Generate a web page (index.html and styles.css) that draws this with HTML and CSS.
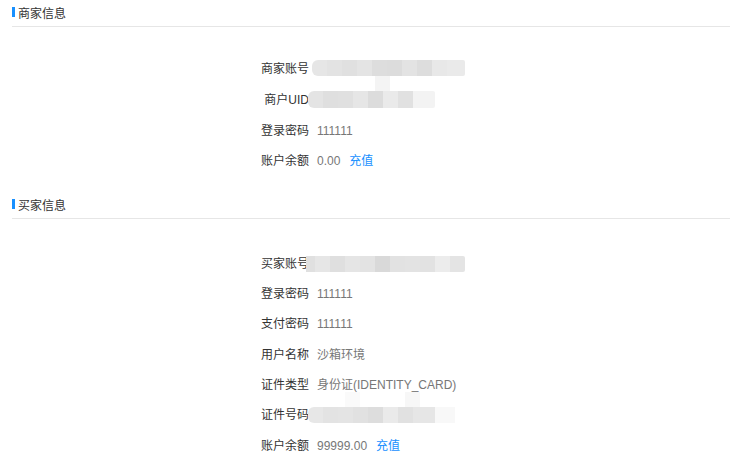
FILE: index.html
```html
<!DOCTYPE html>
<html lang="zh-CN">
<head>
<meta charset="utf-8">
<title>账户信息</title>
<link rel="stylesheet" href="styles.css">
</head>
<body>
<div class="page">
  <section class="section section-merchant">
    <div class="section-head"><span class="bar"></span><span class="title">商家信息</span></div>
    <div class="rows">
      <div class="row"><span class="label">商家账号</span><span class="value"><span class="blur blur-merchant"></span></span></div>
      <div class="row"><span class="label">商户UID</span><span class="value"><span class="blur blur-uid"></span></span></div>
      <div class="row"><span class="label">登录密码</span><span class="value">111111</span></div>
      <div class="row"><span class="label">账户余额</span><span class="value">0.00<a class="link" href="#">充值</a></span></div>
    </div>
  </section>
  <section class="section section-buyer">
    <div class="section-head"><span class="bar"></span><span class="title">买家信息</span></div>
    <div class="rows">
      <div class="row"><span class="label">买家账号</span><span class="value"><span class="blur blur-buyer"></span></span></div>
      <div class="row"><span class="label">登录密码</span><span class="value">111111</span></div>
      <div class="row"><span class="label">支付密码</span><span class="value">111111</span></div>
      <div class="row"><span class="label">用户名称</span><span class="value">沙箱环境</span></div>
      <div class="row"><span class="label">证件类型</span><span class="value">身份证(IDENTITY_CARD)</span></div>
      <div class="row"><span class="label">证件号码</span><span class="value"><span class="blur blur-id"></span></span></div>
      <div class="row"><span class="label">账户余额</span><span class="value">99999.00<a class="link" href="#">充值</a></span></div>
    </div>
  </section>
</div>
</body>
</html>
```
FILE: styles.css
```css
html, body {
  margin: 0;
  padding: 0;
  background: #ffffff;
}
body {
  font-family: "Liberation Sans", "Noto Sans CJK SC", sans-serif;
  font-size: 12px;
  color: #333333;
}
.page {
  padding: 0 1px 0 12px;
}
.section-head {
  display: flex;
  align-items: flex-start;
  height: 26px;
  border-bottom: 1px solid #e6e6e6;
}
.bar {
  width: 3px;
  height: 10px;
  margin-top: 7px;
  background: #1890ff;
}
.title {
  margin-left: 3px;
  padding-top: 5px;
  line-height: 18px;
  color: #333333;
}
.rows {
  display: flex;
  flex-direction: column;
  padding-left: 197px;
}
.section-merchant .rows {
  padding-top: 27px;
  padding-bottom: 15px;
}
.section-merchant .row {
  height: 30.67px;
}
.section-buyer .rows {
  padding-top: 30px;
}
.row {
  display: grid;
  grid-template-columns: 100px auto;
  column-gap: 8px;
  height: 30.33px;
  align-items: center;
  line-height: 18px;
}
.label {
  text-align: right;
  color: #333333;
  white-space: nowrap;
}
.value {
  display: flex;
  align-items: center;
  color: #777777;
  white-space: nowrap;
  line-height: 18px;
}
.link {
  margin-left: 9px;
  color: #1890ff;
  text-decoration: none;
}
.blur {
  position: relative;
  display: block;
  height: 16px;
  border-radius: 6px 2px 2px 6px;
}
.blur-merchant {
  width: 153px;
  margin-left: -5px;
  margin-top: -2px;
  background: linear-gradient(to right,
    #e6e6e6 0 15px, #e3e3e3 15px 30px, #e0e0e0 30px 45px, #e4e4e4 45px 60px,
    #dddddd 60px 75px, #dcdcdc 75px 90px, #e3e3e3 90px 105px, #dddddd 105px 120px,
    #e8e8e8 120px 135px, #eaeaea 135px 153px);
}
.blur-merchant::after {
  content: "";
  position: absolute;
  left: 63px;
  top: 16px;
  width: 15px;
  height: 16px;
  background: #f4f4f4;
}
.blur-uid {
  width: 127px;
  margin-left: -9px;
  height: 17px;
  background: linear-gradient(to right,
    #e4e4e4 0 15px, #dfdfdf 15px 30px, #e0e0e0 30px 45px, #e6e6e6 45px 60px,
    #dcdcdc 60px 75px, #eaeaea 75px 90px, #e1e1e1 90px 105px, #f3f3f3 105px 127px);
}
.blur-buyer {
  width: 159px;
  margin-left: -11px;
  border-radius: 0 2px 2px 0;
  background: linear-gradient(to right,
    #e0e0e0 0 9px, #e6e6e6 9px 24px, #dfdfdf 24px 39px, #e5e5e5 39px 54px,
    #e3e3e3 54px 69px, #d9d9d9 69px 84px, #e2e2e2 84px 99px, #e3e3e3 99px 114px,
    #e2e2e2 114px 129px, #ececec 129px 144px, #e4e4e4 144px 159px);
}
.blur-id {
  width: 147px;
  margin-left: -9px;
  border-radius: 6px 0 0 6px;
  background: linear-gradient(to right,
    #e7e7e7 0 15px, #e3e3e3 15px 30px, #e4e4e4 30px 45px, #e1e1e1 45px 60px,
    #dddddd 60px 75px, #eaeaea 75px 90px, #e1e1e1 90px 105px, #e6e6e6 105px 127px,
    #f8f8f8 127px 147px);
}
.blur-id::after {
  content: "";
  position: absolute;
  left: 37px;
  top: -15px;
  width: 75px;
  height: 15px;
  background: linear-gradient(to right, #fafafa 0 15px, #ffffff 15px 60px, #f7f7f7 60px 75px);
}
```
